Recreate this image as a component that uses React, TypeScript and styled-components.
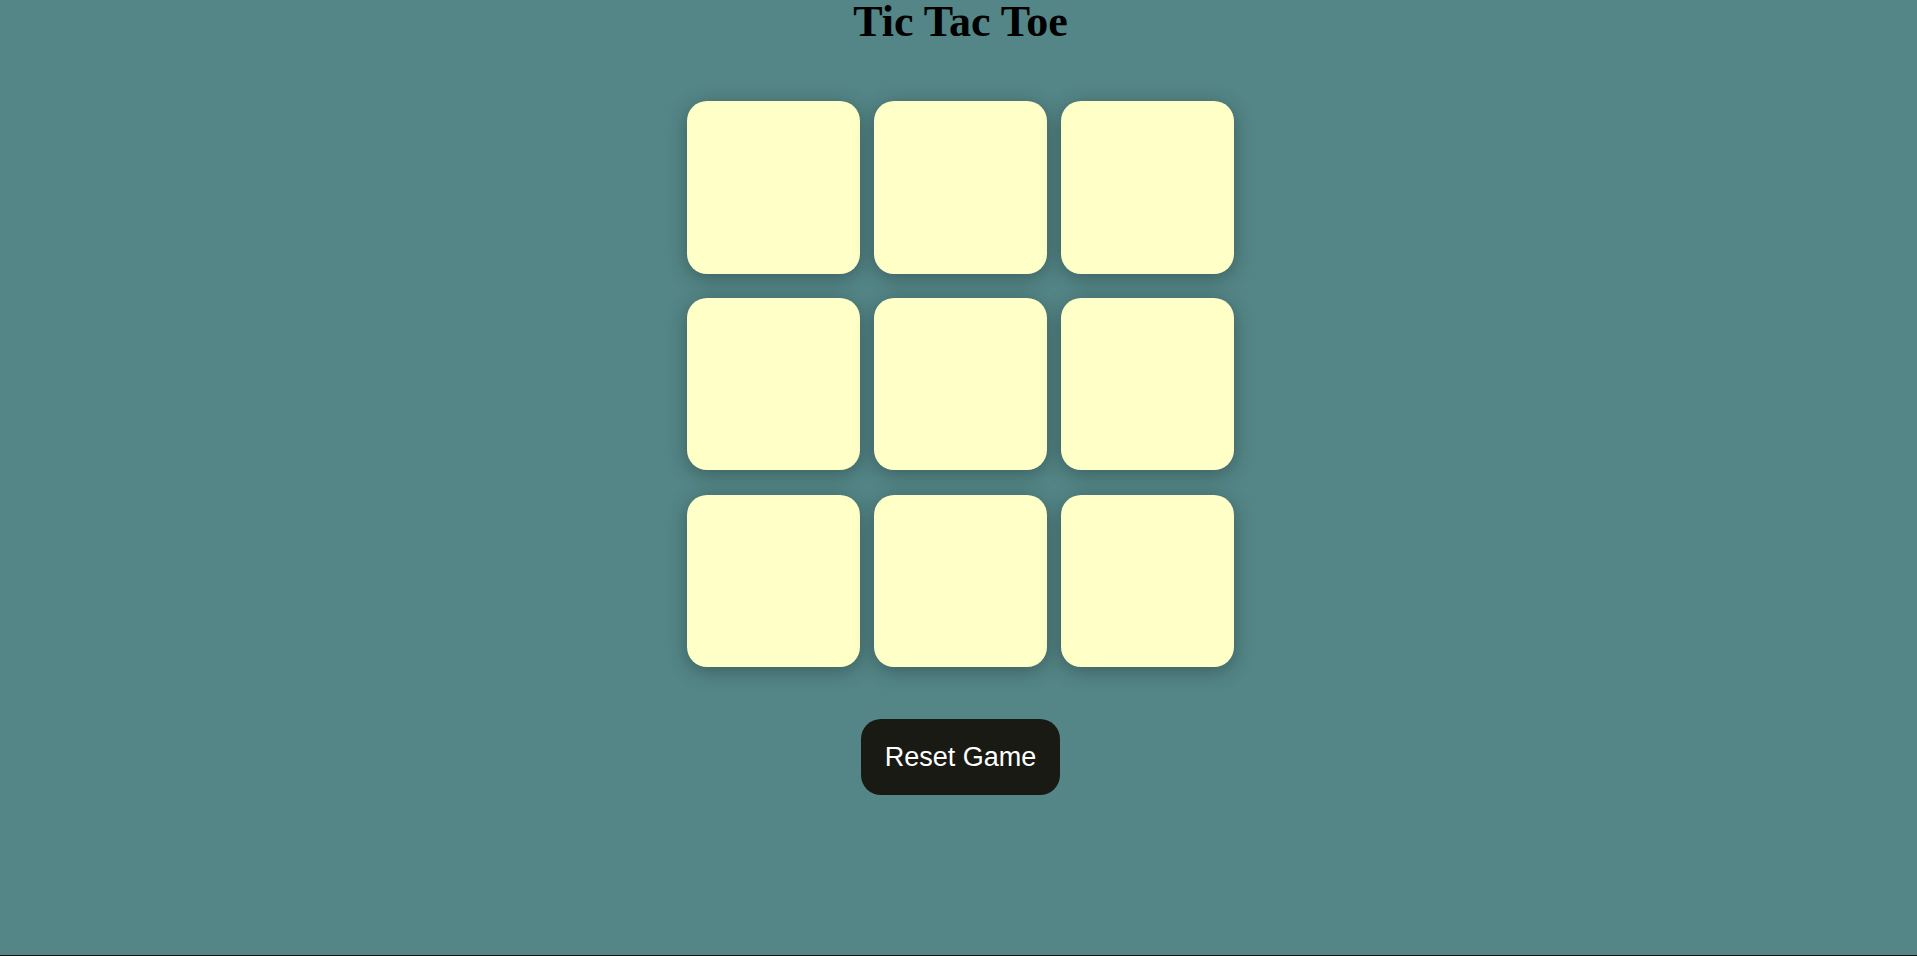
import React, { useState } from "react";
import styled, { createGlobalStyle } from "styled-components";

const GlobalStyle = createGlobalStyle`
  html, body {
    margin: 0;
    padding: 0;
    background: #548687;
  }
  * { box-sizing: border-box; }
`;

const Page = styled.main`
  height: 100vh;
  border-bottom: 1px solid #111;
  display: flex;
  flex-direction: column;
  align-items: center;
  padding-left: 4px;
  background: #548687;
`;

const Title = styled.h1`
  margin: 0;
  font-family: "Liberation Serif", "Times New Roman", serif;
  font-weight: 700;
  font-size: 44px;
  line-height: 44px;
  height: 44px;
  color: #000;
`;

const Board = styled.div`
  margin-top: 57px;
  display: grid;
  grid-template-columns: repeat(3, 172.5px);
  grid-auto-rows: 172.5px;
  column-gap: 14.5px;
  row-gap: 24.3px;
`;

const Cell = styled.button`
  border: none;
  padding: 0;
  background: #ffffc8;
  border-radius: 20px;
  box-shadow: 0 4px 20px rgba(0, 0, 0, 0.3);
  font-family: "Liberation Sans", Arial, sans-serif;
  font-size: 96px;
  font-weight: 700;
  color: #1a1a14;
  cursor: pointer;
`;

const ResetButton = styled.button`
  margin-top: 52px;
  width: 199px;
  height: 76px;
  border: none;
  border-radius: 20px;
  background: #1a1a14;
  color: #ffffff;
  font-family: "Liberation Sans", Arial, sans-serif;
  font-size: 27px;
  cursor: pointer;
`;

export default function App() {
  const [cells, setCells] = useState<(string | null)[]>(Array(9).fill(null));
  const [turn, setTurn] = useState<"X" | "O">("X");

  const play = (i: number) => {
    if (cells[i]) return;
    const next = cells.slice();
    next[i] = turn;
    setCells(next);
    setTurn(turn === "X" ? "O" : "X");
  };

  const reset = () => {
    setCells(Array(9).fill(null));
    setTurn("X");
  };

  return (
    <>
      <GlobalStyle />
      <Page>
        <Title>Tic Tac Toe</Title>
        <Board>
          {cells.map((c, i) => (
            <Cell key={i} onClick={() => play(i)}>
              {c}
            </Cell>
          ))}
        </Board>
        <ResetButton onClick={reset}>Reset Game</ResetButton>
      </Page>
    </>
  );
}
